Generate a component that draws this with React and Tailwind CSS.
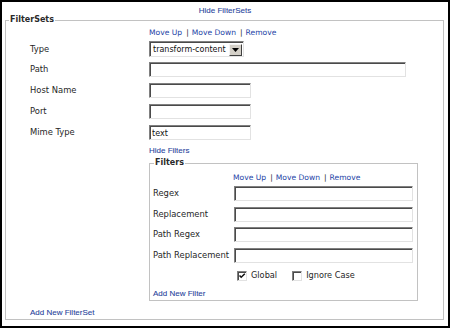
const LINK = 'text-[#1f3f9b] font-["Liberation_Sans",Arial,sans-serif] text-[8px] [-webkit-text-stroke:0.08px_#1f3f9b]'

function MoveLinks() {
  return (
    <div className="flex items-center text-[7.6px] text-[#2444a6]">
      <span>Move Up</span>
      <span className="ml-[4px] mr-[3px] text-[#222]">|</span>
      <span>Move Down</span>
      <span className="ml-[4px] mr-[3px] text-[#222]">|</span>
      <span>Remove</span>
    </div>
  )
}

function Field({ width, value = '' }) {
  return (
    <input
      readOnly
      defaultValue={value}
      className={`${width} h-[15px] bg-white border border-t-[#808080] border-l-[#808080] border-b-[#e2e2e2] border-r-[#e2e2e2] shadow-[inset_1px_1px_0_#4a4a4a] pl-[2px] pt-[1px] text-[8px] text-[#111] outline-none`}
    />
  )
}

function Check({ checked }) {
  return (
    <span className="w-[10px] h-[10px] bg-white border border-t-[#808080] border-l-[#808080] border-b-[#e2e2e2] border-r-[#e2e2e2] shadow-[inset_1px_1px_0_#4a4a4a] flex items-center justify-center">
      {checked && (
        <svg width="8" height="8" viewBox="0 0 8 8">
          <path d="M1.5 3.5 L3.2 5.3 L6.8 1.8" fill="none" stroke="#111" strokeWidth="1.5" />
        </svg>
      )}
    </span>
  )
}

export default function App() {
  return (
    <div className="w-[450px] h-[328px] border-2 border-black bg-white text-[#262626] font-['DejaVu_Sans',Verdana,sans-serif] text-[8.4px]">
      <div className="h-[14px] pt-[2px] leading-[12px] text-center">
        <span className={LINK}>Hide FilterSets</span>
      </div>

      <fieldset className="ml-[3px] w-[439px] border border-[#c2c2c2]">
        <legend className="ml-[3px] px-[1px] leading-[8px] text-[8px] font-bold text-[#2a2a2a]">FilterSets</legend>

        <div className="pl-[24px]">
          <div className="h-[17px] pl-[119px] flex items-center">
            <MoveLinks />
          </div>

          <div className="h-[16px] flex items-center">
            <span className="w-[119px]">Type</span>
            <div className="w-[95px] h-[16px] flex items-center bg-white border border-t-[#808080] border-l-[#808080] border-b-[#e2e2e2] border-r-[#e2e2e2] shadow-[inset_1px_1px_0_#4a4a4a]">
              <span className="flex-1 pl-[3px] pt-[1px] text-[8px] text-[#111]">transform-content</span>
              <span className="w-[13px] h-[12px] mr-[1px] mt-[1px] bg-[#d4d0c8] border border-t-[#f4f4f4] border-l-[#f4f4f4] border-b-[#404040] border-r-[#404040] flex items-center justify-center">
                <svg width="7" height="4" viewBox="0 0 7 4">
                  <path d="M0 0 H7 L3.5 4 Z" fill="#000" />
                </svg>
              </span>
            </div>
          </div>

          <div className="mt-[5px] h-[15px] flex items-center">
            <span className="w-[119px]">Path</span>
            <Field width="w-[257px]" />
          </div>
          <div className="mt-[6px] h-[15px] flex items-center">
            <span className="w-[119px]">Host Name</span>
            <Field width="w-[102px]" />
          </div>
          <div className="mt-[6px] h-[15px] flex items-center">
            <span className="w-[119px]">Port</span>
            <Field width="w-[102px]" />
          </div>
          <div className="mt-[6px] h-[15px] flex items-center">
            <span className="w-[119px]">Mime Type</span>
            <Field width="w-[102px]" value="text" />
          </div>

          <div className="h-[17px] pt-[3px] pl-[119px] leading-[14px]">
            <span className={LINK}>Hide Filters</span>
          </div>

          {/* Filters */}
          <fieldset className="ml-[119px] w-[269px] border border-[#c2c2c2]">
            <legend className="ml-[4px] px-[1px] leading-[12px] text-[8px] font-bold text-[#2a2a2a]">Filters</legend>
            <div className="pl-[3px]">
              <div className="h-[17px] pl-[80px] flex items-center">
                <MoveLinks />
              </div>
              <div className="h-[15px] flex items-center">
                <span className="w-[81px]">Regex</span>
                <Field width="w-[179px]" />
              </div>
              <div className="mt-[6px] h-[15px] flex items-center">
                <span className="w-[81px]">Replacement</span>
                <Field width="w-[179px]" />
              </div>
              <div className="mt-[5px] h-[15px] flex items-center">
                <span className="w-[81px]">Path Regex</span>
                <Field width="w-[179px]" />
              </div>
              <div className="mt-[6px] h-[15px] flex items-center">
                <span className="w-[81px] whitespace-nowrap">Path Replacement</span>
                <Field width="w-[179px]" />
              </div>
              <div className="h-[23px] pt-[2px] pl-[84px] flex items-center">
                <Check checked />
                <span className="ml-[4px] text-[8.2px]">Global</span>
                <span className="ml-[15px]"><Check /></span>
                <span className="ml-[4px] text-[8.2px]">Ignore Case</span>
              </div>
              <div className="h-[14px] leading-[14px]">
                <span className={LINK}>Add New Filter</span>
              </div>
            </div>
          </fieldset>

          <div className="h-[18px] pt-[4px] leading-[14px]">
            <span className={LINK}>Add New FilterSet</span>
          </div>
        </div>
      </fieldset>
    </div>
  )
}
